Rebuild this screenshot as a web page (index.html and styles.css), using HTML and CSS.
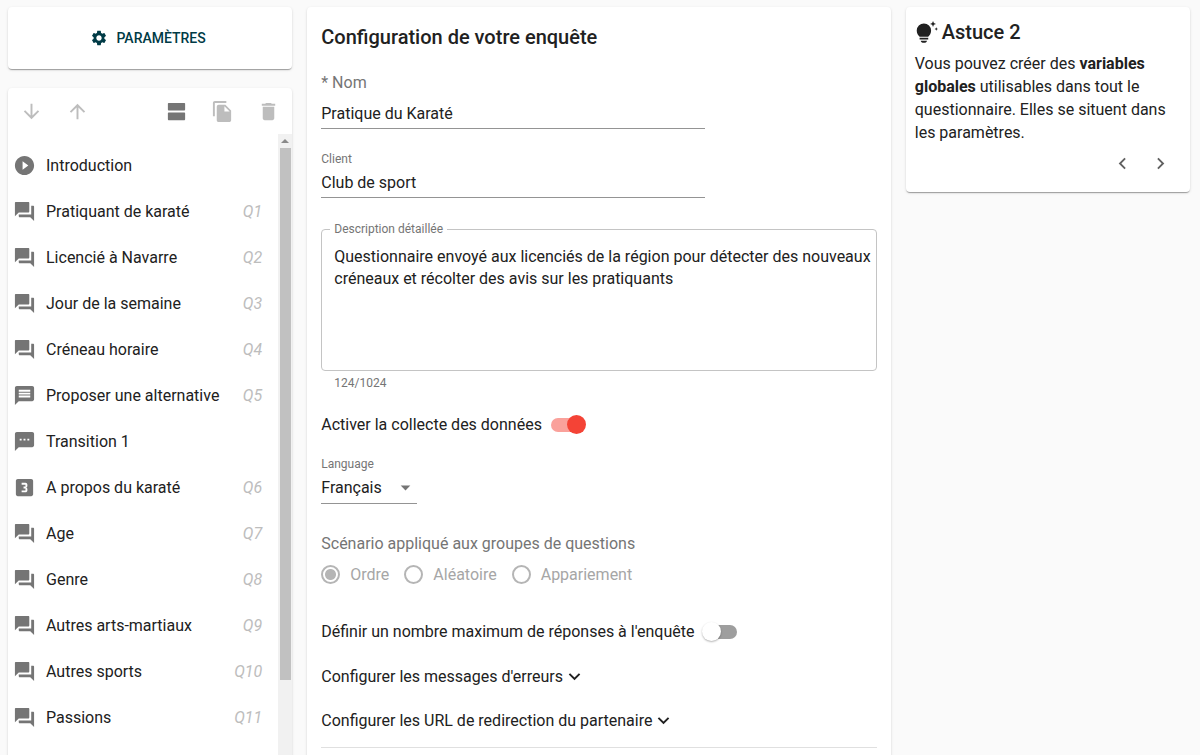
FILE: index.html
```html
<!DOCTYPE html>
<html lang="fr">
<head>
  <meta charset="UTF-8">
  <meta name="viewport" content="width=device-width, initial-scale=1.0">
  <title>Configuration de votre enquête</title>
  <link rel="stylesheet" href="styles.css">
</head>
<body>
  <svg class="sprite" aria-hidden="true">
    <symbol id="forum" viewBox="0 0 24 24"><path d="M21 6h-2v9H6v2c0 .55.45 1 1 1h11l4 4V7c0-.55-.45-1-1-1zm-4 6V3c0-.55-.45-1-1-1H3c-.55 0-1 .45-1 1v14l4-4h10c.55 0 1-.45 1-1z"/></symbol>
    <symbol id="chevron-down" viewBox="0 0 24 24"><path d="M16.59 8.59L12 13.17 7.41 8.59 6 10l6 6 6-6z"/></symbol>
  </svg>

  <div class="page">
    <aside class="sidebar">
      <div class="card settings">
        <button type="button" class="settings-btn">
          <svg viewBox="0 0 24 24"><path d="M19.14 12.94c.04-.3.06-.61.06-.94 0-.32-.02-.64-.07-.94l2.03-1.58c.18-.14.23-.41.12-.61l-1.92-3.32c-.12-.22-.37-.29-.59-.22l-2.39.96c-.5-.38-1.03-.7-1.62-.94l-.36-2.54c-.04-.24-.24-.41-.48-.41h-3.84c-.24 0-.43.17-.47.41l-.36 2.54c-.59.24-1.13.57-1.62.94l-2.39-.96c-.22-.08-.47 0-.59.22L2.74 8.87c-.12.21-.08.47.12.61l2.03 1.58c-.05.3-.09.63-.09.94s.02.64.07.94l-2.03 1.58c-.18.14-.23.41-.12.61l1.92 3.32c.12.22.37.29.59.22l2.39-.96c.5.38 1.03.7 1.62.94l.36 2.54c.05.24.24.41.48.41h3.84c.24 0 .44-.17.47-.41l.36-2.54c.59-.24 1.13-.56 1.62-.94l2.39.96c.22.08.47 0 .59-.22l1.92-3.32c.12-.22.07-.47-.12-.61l-2.01-1.58zM12 15.6c-1.98 0-3.6-1.62-3.6-3.6s1.62-3.6 3.6-3.6 3.6 1.62 3.6 3.6-1.62 3.6-3.6 3.6z"/></svg>
          PARAMÈTRES
        </button>
      </div>

      <div class="card outline">
        <div class="toolbar">
          <button type="button" class="icon-btn" aria-label="Descendre" disabled><svg viewBox="0 0 24 24"><path d="M20 12l-1.410-1.410L13 16.170V4h-2v12.170l-5.580-5.590L4 12l8 8 8-8z"/></svg></button>
          <button type="button" class="icon-btn" aria-label="Monter" disabled><svg viewBox="0 0 24 24"><path d="M4 12l1.410 1.410L11 7.830V20h2V7.830l5.580 5.590L20 12l-8-8-8 8z"/></svg></button>
          <button type="button" class="icon-btn add" aria-label="Ajouter un groupe"><svg viewBox="0 0 24 24"><path d="M20 13H4c-.55 0-1 .45-1 1v6c0 .55.45 1 1 1h16c.55 0 1-.45 1-1v-6c0-.55-.45-1-1-1zm0-10H4c-.55 0-1 .45-1 1v6c0 .55.45 1 1 1h16c.55 0 1-.45 1-1V4c0-.55-.45-1-1-1z"/></svg></button>
          <button type="button" class="icon-btn" aria-label="Copier" disabled><svg viewBox="0 0 24 24"><path d="M16 1H4c-1.100 0-2 .9-2 2v14h2V3h12V1zm-1 4l6 6v10c0 1.100-.9 2-2 2H7.990C6.890 23 6 22.100 6 21l.01-14c0-1.100.89-2 1.990-2h7zm-1 7h5.500L14 6.500V12z"/></svg></button>
          <button type="button" class="icon-btn" aria-label="Supprimer" disabled><svg viewBox="0 0 24 24"><path d="M6 19c0 1.100.9 2 2 2h8c1.100 0 2-.9 2-2V7H6v12zM19 4h-3.500l-1-1h-5l-1 1H5v2h14V4z"/></svg></button>
        </div>
        <div class="outline-body">
          <ul class="questions">
            <li><svg viewBox="0 0 24 24"><path d="M12 2C6.480 2 2 6.480 2 12s4.480 10 10 10 10-4.480 10-10S17.520 2 12 2zm-2 14.500v-9l6 4.500-6 4.500z"/></svg><span>Introduction</span></li>
            <li><svg><use href="#forum"/></svg><span>Pratiquant de karaté</span><em>Q1</em></li>
            <li><svg><use href="#forum"/></svg><span>Licencié à Navarre</span><em>Q2</em></li>
            <li><svg><use href="#forum"/></svg><span>Jour de la semaine</span><em>Q3</em></li>
            <li><svg><use href="#forum"/></svg><span>Créneau horaire</span><em>Q4</em></li>
            <li><svg viewBox="0 0 24 24"><path d="M20 2H4c-1.100 0-1.990.9-1.990 2L2 22l4-4h14c1.100 0 2-.9 2-2V4c0-1.100-.9-2-2-2zM6 9h12v2H6V9zm12 5H6v-2h12v2zm0-6H6V6h12v2z"/></svg><span>Proposer une alternative</span><em>Q5</em></li>
            <li><svg viewBox="0 0 24 24"><path d="M20 2H4c-1.100 0-1.990.9-1.990 2L2 22l4-4h14c1.100 0 2-.9 2-2V4c0-1.100-.9-2-2-2zM9 11H7V9h2v2zm4 0h-2V9h2v2zm4 0h-2V9h2v2z"/></svg><span>Transition 1</span></li>
            <li><svg viewBox="0 0 24 24"><path d="M19 3H5c-1.100 0-2 .9-2 2v14c0 1.100.9 2 2 2h14c1.100 0 2-.9 2-2V5c0-1.100-.9-2-2-2zm-4 7.500c0 .83-.67 1.500-1.500 1.500.83 0 1.500.67 1.500 1.500V15c0 1.110-.9 2-2 2H9v-2h4v-2h-2v-2h2V9H9V7h4c1.100 0 2 .89 2 2v1.500z"/></svg><span>A propos du karaté</span><em>Q6</em></li>
            <li><svg><use href="#forum"/></svg><span>Age</span><em>Q7</em></li>
            <li><svg><use href="#forum"/></svg><span>Genre</span><em>Q8</em></li>
            <li><svg><use href="#forum"/></svg><span>Autres arts-martiaux</span><em>Q9</em></li>
            <li><svg><use href="#forum"/></svg><span>Autres sports</span><em>Q10</em></li>
            <li><svg><use href="#forum"/></svg><span>Passions</span><em>Q11</em></li>
          </ul>
          <div class="scrollbar" aria-hidden="true">
            <svg class="scroll-up" viewBox="0 0 14 14"><path d="M3 9l4-4 4 4z"/></svg>
            <div class="thumb"></div>
          </div>
        </div>
      </div>
    </aside>

    <main class="card config">
      <h1>Configuration de votre enquête</h1>

      <div class="field">
        <label class="large" for="name">* Nom</label>
        <input id="name" type="text" value="Pratique du Karaté">
      </div>
      <div class="field">
        <label for="client">Client</label>
        <input id="client" type="text" value="Club de sport">
      </div>

      <div class="outlined">
        <label for="description">Description détaillée</label>
        <textarea id="description" maxlength="1024">Questionnaire envoyé aux licenciés de la région pour détecter des nouveaux créneaux et récolter des avis sur les pratiquants</textarea>
      </div>
      <p class="counter">124/1024</p>

      <label class="switch-row collect">Activer la collecte des données
        <input class="switch" type="checkbox" checked>
      </label>

      <div class="field language">
        <label for="language">Language</label>
        <div class="select">
          <select id="language"><option>Français</option></select>
          <svg viewBox="0 0 24 24"><path d="M7 10l5 5 5-5z"/></svg>
        </div>
      </div>

      <fieldset class="scenario" disabled>
        <legend>Scénario appliqué aux groupes de questions</legend>
        <div class="radios">
          <label><input type="radio" name="scenario" checked>Ordre</label>
          <label><input type="radio" name="scenario">Aléatoire</label>
          <label><input type="radio" name="scenario">Appariement</label>
        </div>
      </fieldset>

      <label class="switch-row">Définir un nombre maximum de réponses à l'enquête
        <input class="switch" type="checkbox">
      </label>

      <div class="expanders">
        <button type="button">Configurer les messages d'erreurs<svg><use href="#chevron-down"/></svg></button>
        <button type="button">Configurer les URL de redirection du partenaire<svg><use href="#chevron-down"/></svg></button>
      </div>
      <hr>
    </main>

    <aside class="card tip">
      <h2>
        <svg viewBox="0 0 24 24"><path d="M6 20.500h6.500c0 1.200-1.200 2.200-3.250 2.200S6 21.700 6 20.500zM4.800 17.600h9v1.700h-9zM9.300 2.500a7.500 7.500 0 0 1 7.500 7.500c0 3-1.500 5-3 6.500H4.800c-1.500-1.500-3-3.500-3-6.500a7.500 7.500 0 0 1 7.500-7.500zM18.800 0l.9 2.200 2.200.9-2.200.9-.9 2.200-.9-2.200-2.200-.9 2.200-.9zM22.200 6.500l.6 1.200 1.200.6-1.200.6-.6 1.200-.6-1.200-1.200-.6 1.200-.6z"/></svg>
        Astuce 2
      </h2>
      <p>Vous pouvez créer des <b>variables globales</b> utilisables dans tout le questionnaire. Elles se situent dans les paramètres.</p>
      <div class="tip-nav">
        <button type="button" aria-label="Précédent"><svg viewBox="0 0 24 24"><path d="M15.410 7.410L14 6l-6 6 6 6 1.410-1.410L10.830 12z"/></svg></button>
        <button type="button" aria-label="Suivant"><svg viewBox="0 0 24 24"><path d="M10 6L8.590 7.410 13.170 12l-4.580 4.590L10 18l6-6z"/></svg></button>
      </div>
    </aside>
  </div>
</body>
</html>
```
FILE: styles.css
```css
* { box-sizing: border-box; }
body { margin: 0; background: #fafafa; color: #212121; font-family: Roboto, "Liberation Sans", sans-serif; font-size: 16px; line-height: 23px; }
button, input, select, textarea { font: inherit; color: inherit; }
button { padding: 0; border: none; background: none; cursor: pointer; }
button:disabled { cursor: default; }
svg { width: 23px; height: 23px; fill: currentColor; flex-shrink: 0; }
.sprite { display: none; }

.page { display: grid; grid-template-columns: repeat(12, 1fr); column-gap: 15px; height: 100vh; padding: 7px 10px 0 8px; overflow: hidden; }
.card { background: #fff; border-radius: 4px; box-shadow: 0 2px 1px -1px rgba(0,0,0,0.2), 0 1px 1px rgba(0,0,0,0.14), 0 1px 3px rgba(0,0,0,0.12); }

/* left column */
.sidebar { grid-column: span 3; display: flex; flex-direction: column; gap: 19px; min-height: 0; }
.settings { padding: 14px; }
.settings-btn { display: flex; align-items: center; justify-content: center; gap: 8px; width: 100%; height: 34px; padding-right: 4px; color: #003b46; font-size: 14px; font-weight: 500; }
.settings-btn svg { width: 18px; height: 18px; }
.outline { flex: 1; display: flex; flex-direction: column; min-height: 0; border-radius: 4px 4px 0 0; }
.toolbar { display: flex; padding-right: 1px; }
.icon-btn { display: flex; align-items: center; justify-content: center; width: 46px; height: 46px; color: #bdbdbd; }
.icon-btn.add { margin-left: auto; color: #757575; }
.outline-body { flex: 1; display: flex; min-height: 0; }
.questions { flex: 1; margin: 0; padding: 8px 0; list-style: none; overflow: hidden; }
.questions li { display: flex; align-items: center; gap: 10px; height: 46px; padding: 0 16px 0 5px; }
.questions svg { color: #757575; }
.questions span { flex: 1; }
.questions em { color: #bdbdbd; }
.scrollbar { display: flex; flex-direction: column; align-items: center; width: 14px; background: #f1f1f1; }
.scroll-up { width: 14px; height: 14px; color: #8a8a8a; }
.thumb { width: 11px; height: 84%; background: #c1c1c1; }

/* form */
.config { grid-column: span 6; padding: 19px 14px; border-radius: 4px 4px 0 0; }
h1, h2 { margin: 0; font-size: 20px; font-weight: 500; }
.field { display: flex; flex-direction: column; width: 384px; max-width: 100%; margin-top: 22px; }
.field label { color: #757575; font-size: 12px; line-height: 16px; }
.field label.large { margin-bottom: 4px; font-size: 16px; line-height: 23px; }
.field input { height: 31px; padding: 0; border: none; border-bottom: 1px solid #949494; background: none; outline: none; }
.outlined { position: relative; margin-top: 31px; }
.outlined label { position: absolute; top: -8px; left: 9px; padding: 0 4px; background: #fff; color: #757575; font-size: 12px; line-height: 16px; }
.outlined textarea { display: block; width: 100%; height: 142px; padding: 16px 2px 16px 12px; border: 1px solid #c4c4c4; border-radius: 4px; background: none; outline: none; resize: none; line-height: 22px; }
.counter { margin: 4px 13px 0; color: #757575; font-size: 12px; line-height: 16px; }
.switch-row { display: flex; align-items: center; gap: 8px; }
.collect { margin-top: 22px; }
.switch { appearance: none; position: relative; display: flex; align-items: center; width: 36px; height: 20px; margin: 0; }
.switch::before { content: ""; width: 33px; height: 14px; margin: 0 auto; border-radius: 7px; background: #9e9e9e; }
.switch::after { content: ""; position: absolute; left: 0; top: 0; width: 19px; height: 19px; border-radius: 50%; background: #fff; box-shadow: 0 1px 2px rgba(0,0,0,0.3); }
.switch:checked::before { background: #faa19b; }
.switch:checked::after { left: auto; right: 0; background: #f44336; box-shadow: none; }
.field.language { width: 96px; margin-top: 20px; }
.select { display: flex; align-items: center; border-bottom: 1px solid #949494; }
.select select { appearance: none; width: 100%; height: 31px; margin-right: -23px; padding: 0; border: none; background: none; outline: none; }
.select svg { color: #757575; pointer-events: none; }
.scenario { margin: 28px 0 0; padding: 0; border: none; color: #757575; }
.scenario legend { padding: 0; }
.radios { display: flex; gap: 15px; margin-top: 8px; color: #a6a6a6; }
.radios label { display: flex; align-items: center; gap: 10px; }
.radios input { appearance: none; width: 19px; height: 19px; margin: 0; border: 2px solid #b5b5b5; border-radius: 50%; }
.radios input:checked { background: radial-gradient(circle, #b5b5b5 5px, transparent 6px); }
.scenario + .switch-row { margin-top: 34px; }
.expanders { display: flex; flex-direction: column; align-items: flex-start; gap: 21px; margin-top: 22px; }
.expanders button { display: flex; align-items: center; }
hr { margin: 15px 0 0; border: none; border-top: 1px solid #e0e0e0; }

/* tip */
.tip { grid-column: span 3; align-self: start; padding: 14px 9px 17px; }
.tip h2 { display: flex; align-items: center; gap: 4px; }
.tip p { margin: 8px 0; }
.tip-nav { display: flex; justify-content: flex-end; gap: 15px; padding-right: 9px; color: #616161; }
.tip-nav button { display: flex; }
```
